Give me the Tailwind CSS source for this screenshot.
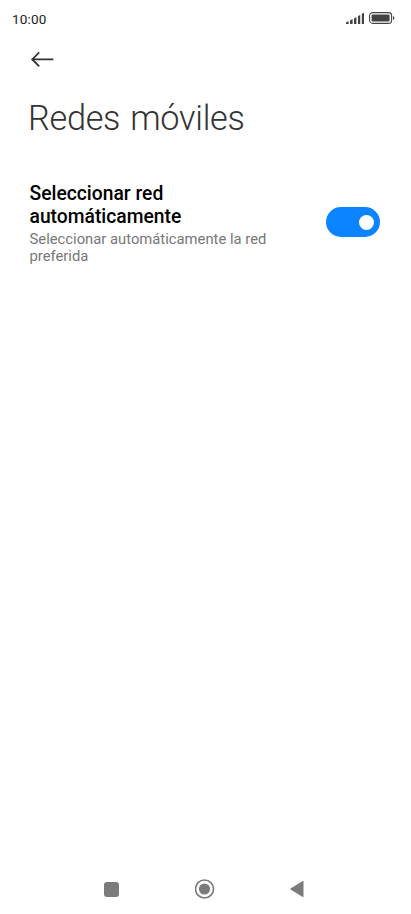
<!DOCTYPE html>
<html lang="es">
<head>
    <meta charset="UTF-8">
    <meta name="viewport" content="width=device-width, initial-scale=1.0">
    <title>Redes móviles</title>
    <script src="https://cdn.jsdelivr.net/npm/@tailwindcss/browser@4"></script>
</head>
<body class="bg-white font-[Roboto,sans-serif]">
    <div class="w-full h-screen flex flex-col overflow-hidden">

        <!-- Barra de estado -->
        <header class="h-[38px] pl-3 pr-4 flex items-center justify-between">
            <span class="text-[13.5px] tracking-[0.2px] text-[#222]">10:00</span>
            <div class="mb-[2px] flex items-center gap-1">
                <svg class="w-5 h-3" viewBox="0 0 20 12" fill="#444">
                    <path d="M1 10.400l2.600-1.300V12H1zM5 8.400l2.600-1.300V12H5zM9 6.400l2.400-1.300V12H9zM13 4l2.200-1.100V12H13zM16.800 1.800l2.200-1.100V12h-2.200z"/>
                </svg>
                <svg class="w-[26px] h-3" viewBox="0 0 26 12">
                    <rect x="0.6" y="0.6" width="22" height="10.8" rx="3.2" fill="none" stroke="#444" stroke-width="1.1"/>
                    <rect x="2.6" y="2.6" width="18" height="6.8" rx="1.2" fill="#444"/>
                    <path d="M24 4v4q1.4-.5 1.4-2T24 4z" fill="#444"/>
                </svg>
            </div>
        </header>

        <!-- Volver -->
        <div class="pl-[30px] pt-[12px]">
            <svg class="w-6 h-[18px]" viewBox="0 0 24 18" fill="none" stroke="#333" stroke-width="1.8">
                <path d="M9.2 2.400 2.200 9.400l7 7M2.200 9.400h21.200"/>
            </svg>
        </div>

        <h1 class="pl-[28px] mt-[29px] text-[34.3px] leading-[42px] font-light tracking-[-0.3px] [word-spacing:2px] text-[#333]">Redes móviles</h1>

        <!-- Ajuste de red -->
        <main class="flex-1 pl-[29.5px] pr-[31px] pt-[43px]">
            <div class="flex items-center justify-between">
                <div class="w-[250px]">
                    <p class="text-[19.3px] leading-[23px] font-medium text-black">Seleccionar red automáticamente</p>
                    <p class="mt-[3px] text-[14.8px] leading-[17px] text-[#777]">Seleccionar automáticamente la red preferida</p>
                </div>
                <div class="w-[54px] h-[30px] mb-[3px] rounded-full bg-[#0d84ff] flex items-center justify-end pr-[6px]">
                    <span class="size-[15px] rounded-full bg-white"></span>
                </div>
            </div>
        </main>

        <!-- Barra de navegación -->
        <nav class="h-[50px] pl-[104px] pr-[107px] flex items-center justify-between">
            <span class="size-[15px] rounded-[3px] bg-[#7b7b7b]"></span>
            <svg class="size-5" viewBox="0 0 20 20">
                <circle cx="9.500" cy="10" r="9" fill="none" stroke="#7b7b7b" stroke-width="1.6"/>
                <circle cx="9.500" cy="10" r="5.6" fill="#7b7b7b"/>
            </svg>
            <svg class="w-[14px] h-[18px]" viewBox="0 0 14 18" fill="#7b7b7b">
                <path d="M13.500 1.500v15q0 .8-.8.4L.6 9.500q-.7-.5 0-1L12.700 1.100q.8-.4.8.4z"/>
            </svg>
        </nav>
    </div>
</body>
</html>
